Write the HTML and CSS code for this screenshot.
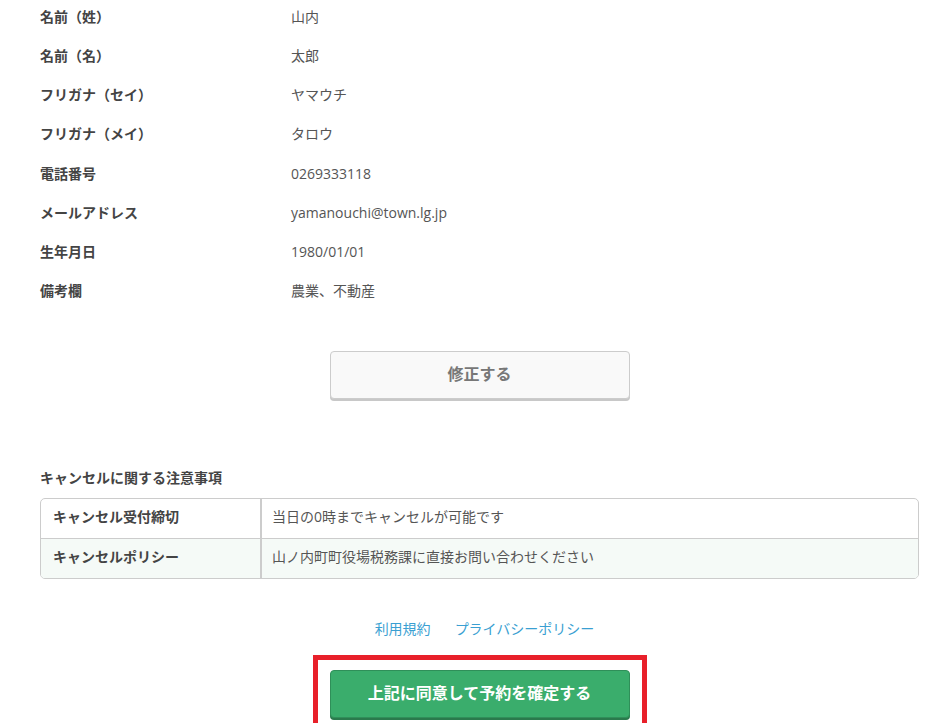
FILE: index.html
```html
<!DOCTYPE html>
<html lang="ja">
<head>
<meta charset="utf-8">
<link rel="stylesheet" href="styles.css">
</head>
<body>
<div class="page">
  <div class="info">
    <div class="row"><div class="label">名前（姓）</div><div class="value">山内</div></div>
    <div class="row"><div class="label">名前（名）</div><div class="value">太郎</div></div>
    <div class="row"><div class="label">フリガナ（セイ）</div><div class="value">ヤマウチ</div></div>
    <div class="row"><div class="label">フリガナ（メイ）</div><div class="value">タロウ</div></div>
    <div class="row"><div class="label">電話番号</div><div class="value">0269333118</div></div>
    <div class="row"><div class="label">メールアドレス</div><div class="value">yamanouchi@town.lg.jp</div></div>
    <div class="row"><div class="label">生年月日</div><div class="value">1980/01/01</div></div>
    <div class="row"><div class="label">備考欄</div><div class="value">農業、不動産</div></div>
  </div>

  <div class="center edit-wrap">
    <button class="btn-edit">修正する</button>
  </div>

  <h3 class="cancel-title">キャンセルに関する注意事項</h3>
  <div class="cancel-table">
    <div class="crow">
      <div class="ccell head">キャンセル受付締切</div>
      <div class="ccell">当日の0時までキャンセルが可能です</div>
    </div>
    <div class="crow alt">
      <div class="ccell head">キャンセルポリシー</div>
      <div class="ccell">山ノ内町町役場税務課に直接お問い合わせください</div>
    </div>
  </div>

  <div class="links">
    <a href="#">利用規約</a>
    <a href="#">プライバシーポリシー</a>
  </div>

  <div class="center">
    <div class="highlight">
      <button class="btn-confirm">上記に同意して予約を確定する</button>
    </div>
  </div>
</div>
</body>
</html>
```

FILE: styles.css
```css
html, body {
  margin: 0;
  padding: 0;
  background: #fff;
}
body {
  font-family: "Open Sans", "Noto Sans CJK JP", sans-serif;
  font-size: 14px;
  color: #555;
  overflow: hidden;
}
.page {
  width: 879px;
  padding-left: 40px;
}
.info {
  margin-top: 0;
}
.row {
  display: flex;
  line-height: 34px;
  padding-bottom: 5.15px;
}
.label {
  width: 251px;
  font-weight: bold;
  color: #444;
}
.value {
  color: #555;
}
.center {
  display: flex;
  justify-content: center;
}
.edit-wrap {
  margin-top: 38px;
}
.btn-edit {
  width: 300px;
  height: 48px;
  border: 1px solid #ccc;
  border-radius: 4px;
  background: #f9f9f9;
  box-shadow: 0 2px 0 #c8c8c8;
  font-family: inherit;
  font-size: 16px;
  font-weight: bold;
  color: #777;
  margin: 0;
  padding: 0 0 4px;
}
.cancel-title {
  margin: 69px 0 0;
  font-size: 14px;
  font-weight: bold;
  color: #444;
  line-height: 20px;
}
.cancel-table {
  margin-top: 10px;
  border: 1px solid #ccc;
  border-radius: 5px;
  overflow: hidden;
}
.crow {
  display: flex;
  height: 39px;
}
.crow + .crow {
  border-top: 1px solid #ccc;
}
.crow.alt {
  background: #f5faf7;
}
.ccell {
  display: flex;
  align-items: center;
  padding-left: 10px;
  padding-bottom: 5px;
  color: #555;
}
.ccell.head {
  width: 207px;
  padding-left: 12px;
  border-right: 2px solid #ccc;
  font-weight: bold;
  color: #444;
}
.links {
  display: flex;
  justify-content: center;
  gap: 24px;
  margin-top: 40px;
  padding-left: 10px;
  line-height: 20px;
}
.links a {
  color: #3a9fd2;
  text-decoration: none;
}
.highlight {
  margin-top: 16px;
  border: 5px solid #e8202a;
  padding: 10px 12px;
}
.btn-confirm {
  display: block;
  width: 300px;
  height: 48px;
  border: 1px solid #2f8f59;
  border-radius: 4px;
  background: #3aad6c;
  box-shadow: 0 2px 0 #2a7a4c;
  font-family: inherit;
  font-size: 16px;
  font-weight: bold;
  color: #fff;
  margin: 0;
  padding: 0 0 4px;
}
```
